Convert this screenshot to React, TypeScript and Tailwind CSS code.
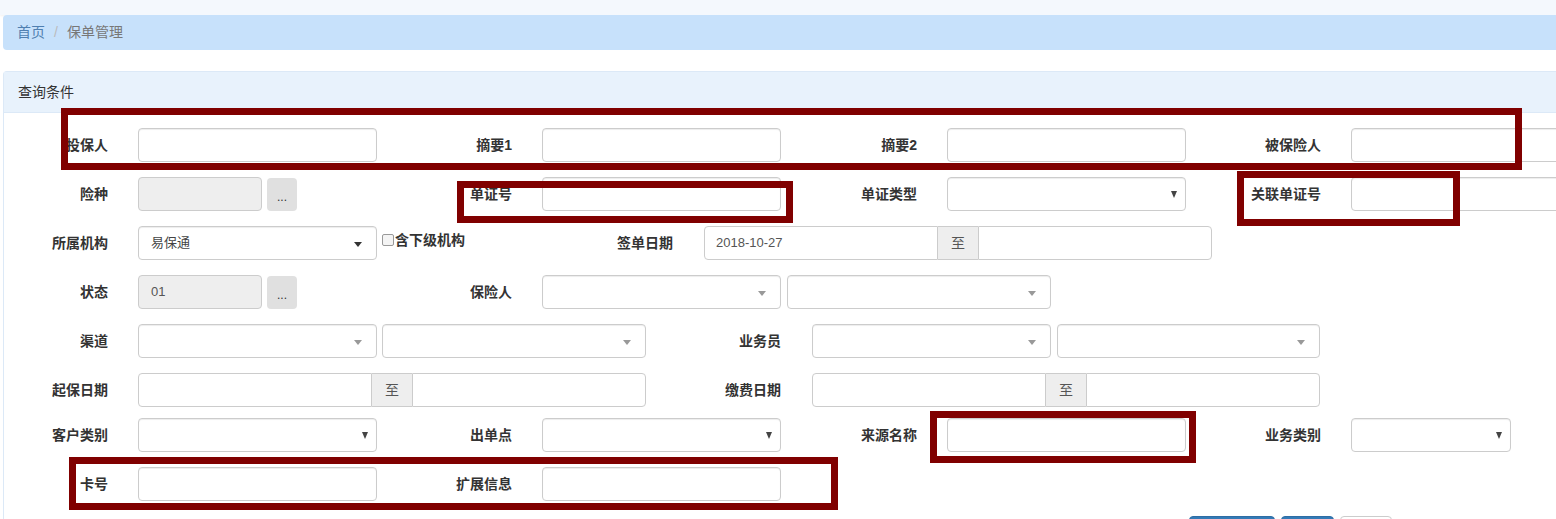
import React from "react";

const font = { fontFamily: '"Liberation Sans", "Noto Sans CJK SC", sans-serif' };

const base =
  "h-[34px] flex-none border border-[#ccc] bg-white rounded-[4px] shadow-[inset_0_1px_1px_rgba(0,0,0,0.075)]";

function Label({ w, children }: { w: string; children: React.ReactNode }) {
  return (
    <div className={`${w} flex-none text-right text-[14px] font-bold text-[#333] leading-[34px] whitespace-nowrap`}>
      {children}
    </div>
  );
}

function Input({ w, ml }: { w: string; ml: string }) {
  return <div className={`${base} ${w} ${ml}`} />;
}

function Select2({ w, ml, dark }: { w: string; ml: string; dark?: boolean }) {
  return (
    <div className={`${base} ${w} ${ml} relative`}>
      <span
        className={`absolute right-[14px] top-[15px] w-0 h-0 border-x-[4px] border-x-transparent border-t-[5px] ${
          dark ? "border-t-[#333]" : "border-t-[#999]"
        }`}
      />
    </div>
  );
}

function Select2Text({ w, ml, text }: { w: string; ml: string; text: string }) {
  return (
    <div className={`${base} ${w} ${ml} relative flex items-center pl-[12px] text-[13px] text-[#444]`}>
      {text}
      <span className="absolute right-[14px] top-[15px] w-0 h-0 border-x-[4px] border-x-transparent border-t-[5px] border-t-[#333]" />
    </div>
  );
}

function NativeSelect({ w, ml }: { w: string; ml: string }) {
  return (
    <div className={`${base} ${w} ${ml} relative`}>
      <span className="absolute right-[8px] top-[13px] w-0 h-0 border-x-[3px] border-x-transparent border-t-[7px] border-t-[#444]" />
    </div>
  );
}

function Disabled({ text }: { text?: string }) {
  return (
    <div className="h-[34px] w-[124px] ml-[30px] flex-none border border-[#ccc] bg-[#eee] rounded-[4px] flex items-center pl-[12px] text-[13px] text-[#555]">
      {text}
    </div>
  );
}

function Dots() {
  return (
    <div className="h-[33px] w-[30px] ml-[5px] flex-none bg-[#e0e0e0] rounded-[4px] flex items-center justify-center text-[12px] text-[#333] pt-[6px]">
      ...
    </div>
  );
}

function DateGroup({ ml, value }: { ml: string; value?: string }) {
  return (
    <div className={`flex flex-none h-[34px] w-[508px] ${ml}`}>
      <div className="w-[234px] h-full border border-[#ccc] rounded-l-[4px] bg-white flex items-center pl-[11px] text-[13px] text-[#555]">
        {value}
      </div>
      <div className="w-[40px] h-full border-y border-[#ccc] bg-[#eee] flex items-center justify-center text-[14px] text-[#555]">
        至
      </div>
      <div className="w-[234px] h-full border border-[#ccc] rounded-r-[4px] bg-white" />
    </div>
  );
}

function RedBox({ cls }: { cls: string }) {
  return <div className={`absolute border-[7px] border-[#800000] pointer-events-none ${cls}`} />;
}

export default function App() {
  return (
    <div className="relative w-[1556px] h-[519px] overflow-hidden bg-white" style={font}>
      <div className="h-[15px] bg-[#f4f8fd] shadow-[0_1px_2px_rgba(0,0,0,0.06)]" />
      <div className="ml-[3px] h-[35px] bg-[#c7e1fb] rounded-l-[4px] flex items-center pl-[14px] text-[14px]">
        <span className="text-[#4f7fb0]">首页</span>
        <span className="text-[#bbb] px-[9px]">/</span>
        <span className="text-[#777]">保单管理</span>
      </div>

      <div className="ml-[3px] mt-[21px] border-l border-t border-[#dce9f7] rounded-tl-[4px]">
        <div className="h-[41px] bg-[#e8f2fc] border-b border-[#dce9f7] flex items-center pl-[14px] text-[14px] text-[#333]">
          查询条件
        </div>
        <div className="pt-[15px] flex flex-col">
          {/* row 1 */}
          <div className="flex items-center">
            <Label w="w-[104px]">投保人</Label>
            <Input w="w-[239px]" ml="ml-[30px]" />
            <Label w="w-[135px]">摘要1</Label>
            <Input w="w-[239px]" ml="ml-[30px]" />
            <Label w="w-[136px]">摘要2</Label>
            <Input w="w-[239px]" ml="ml-[30px]" />
            <Label w="w-[135px]">被保险人</Label>
            <Input w="w-[239px]" ml="ml-[30px]" />
          </div>
          {/* row 2 */}
          <div className="flex items-center mt-[15px]">
            <Label w="w-[104px]">险种</Label>
            <Disabled />
            <Dots />
            <Label w="w-[215px]">单证号</Label>
            <Input w="w-[239px]" ml="ml-[30px]" />
            <Label w="w-[136px]">单证类型</Label>
            <NativeSelect w="w-[239px]" ml="ml-[30px]" />
            <Label w="w-[135px]">关联单证号</Label>
            <Input w="w-[239px]" ml="ml-[30px]" />
          </div>
          {/* row 3 */}
          <div className="flex items-center mt-[15px]">
            <Label w="w-[104px]">所属机构</Label>
            <Select2Text w="w-[239px]" ml="ml-[30px]" text="易保通" />
            <div className="w-[135px] flex-none self-start flex items-center mt-[4px] leading-[20px]">
              <span className="ml-[5px] w-[12px] h-[12px] border border-[#999] rounded-[2px] bg-[#f4f4f4]" />
              <span className="ml-[1px] text-[14px] font-bold text-[#333]">含下级机构</span>
            </div>
            <Label w="w-[161px]">签单日期</Label>
            <DateGroup ml="ml-[31px]" value="2018-10-27" />
          </div>
          {/* row 4 */}
          <div className="flex items-center mt-[15px]">
            <Label w="w-[104px]">状态</Label>
            <Disabled text="01" />
            <Dots />
            <Label w="w-[215px]">保险人</Label>
            <Select2 w="w-[239px]" ml="ml-[30px]" />
            <Select2 w="w-[264px]" ml="ml-[6px]" />
          </div>
          {/* row 5 */}
          <div className="flex items-center mt-[15px]">
            <Label w="w-[104px]">渠道</Label>
            <Select2 w="w-[239px]" ml="ml-[30px]" />
            <Select2 w="w-[264px]" ml="ml-[5px]" />
            <Label w="w-[135px]">业务员</Label>
            <Select2 w="w-[239px]" ml="ml-[31px]" />
            <Select2 w="w-[263px]" ml="ml-[6px]" />
          </div>
          {/* row 6 */}
          <div className="flex items-center mt-[15px]">
            <Label w="w-[104px]">起保日期</Label>
            <DateGroup ml="ml-[30px]" />
            <Label w="w-[135px]">缴费日期</Label>
            <DateGroup ml="ml-[31px]" />
          </div>
          {/* row 7 */}
          <div className="flex items-center mt-[11px]">
            <Label w="w-[104px]">客户类别</Label>
            <NativeSelect w="w-[239px]" ml="ml-[30px]" />
            <Label w="w-[135px]">出单点</Label>
            <NativeSelect w="w-[239px]" ml="ml-[30px]" />
            <Label w="w-[136px]">来源名称</Label>
            <Input w="w-[239px]" ml="ml-[30px]" />
            <Label w="w-[135px]">业务类别</Label>
            <NativeSelect w="w-[160px]" ml="ml-[30px]" />
          </div>
          {/* row 8 */}
          <div className="flex items-center mt-[15px]">
            <Label w="w-[104px]">卡号</Label>
            <Input w="w-[239px]" ml="ml-[30px]" />
            <Label w="w-[135px]">扩展信息</Label>
            <Input w="w-[239px]" ml="ml-[30px]" />
          </div>
          {/* buttons (only top edges visible) */}
          <div className="flex mt-[15px] pl-[1185px] gap-[6px]">
            <div className="h-[34px] w-[86px] bg-[#337ab7] border border-[#2e6da4] rounded-[4px]" />
            <div className="h-[34px] w-[53px] bg-[#337ab7] border border-[#2e6da4] rounded-[4px]" />
            <div className="h-[34px] w-[52px] bg-white border border-[#ccc] rounded-[4px]" />
          </div>
        </div>
      </div>

      <RedBox cls="left-[61px] top-[108px] w-[1461px] h-[62px]" />
      <RedBox cls="left-[457px] top-[181px] w-[336px] h-[42px]" />
      <RedBox cls="left-[1237px] top-[171px] w-[223px] h-[55px]" />
      <RedBox cls="left-[930px] top-[411px] w-[266px] h-[52px]" />
      <RedBox cls="left-[69px] top-[457px] w-[769px] h-[53px]" />
    </div>
  );
}
